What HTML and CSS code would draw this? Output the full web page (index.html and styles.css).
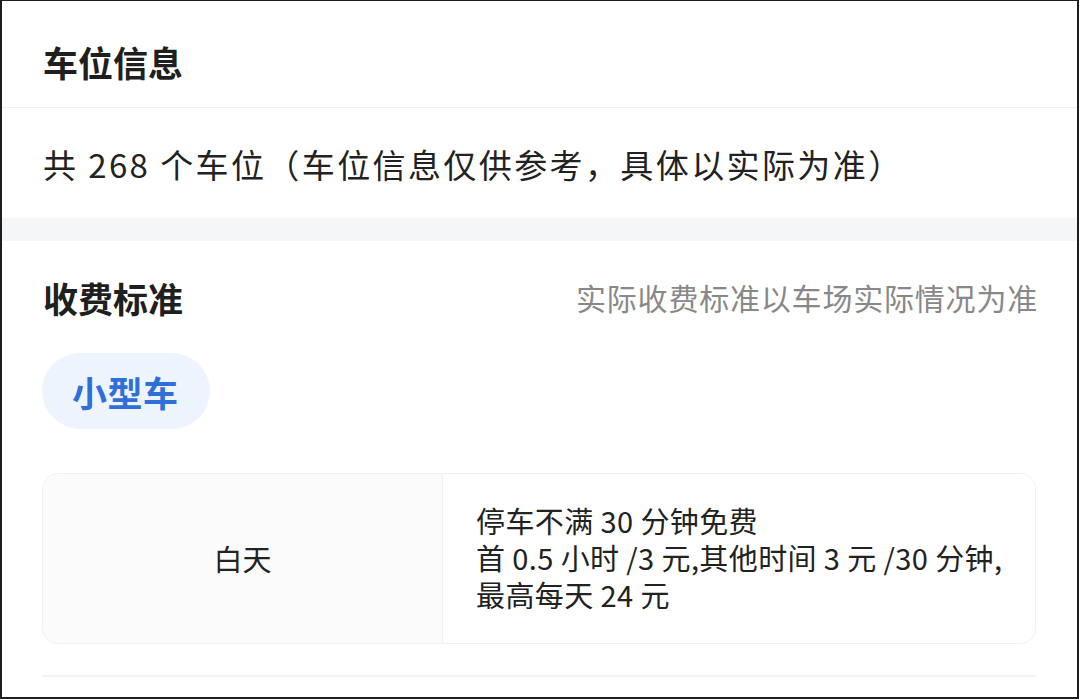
FILE: index.html
```html
<!DOCTYPE html>
<html lang="zh-CN">
<head>
<meta charset="utf-8">
<title>车位信息</title>
<link rel="stylesheet" href="styles.css">
</head>
<body>
<div class="frame">
  <div class="head">
    <h2 class="title">车位信息</h2>
  </div>
  <div class="divider"></div>
  <div class="info">共 268 个车位（车位信息仅供参考，具体以实际为准）</div>
  <div class="band"></div>
  <div class="fee">
    <div class="fee-head">
      <h2 class="title">收费标准</h2>
      <span class="note">实际收费标准以车场实际情况为准</span>
    </div>
    <div class="tags">
      <span class="tag">小型车</span>
    </div>
    <div class="table">
      <div class="cell-label">白天</div>
      <div class="cell-text">
        <p>停车不满 30 分钟免费</p>
        <p>首 0.5 小时 /3 元,其他时间 3 元 /30 分钟,</p>
        <p>最高每天 24 元</p>
      </div>
    </div>
    <div class="bottom-line"></div>
  </div>
</div>
</body>
</html>
```
FILE: styles.css
```css
* { box-sizing: border-box; }
html, body {
  margin: 0;
  padding: 0;
  background: #ffffff;
}
body {
  font-family: "Noto Sans CJK SC", "Noto Sans", sans-serif;
  color: #222222;
}
.frame {
  width: 1079px;
  height: 699px;
  border: 2px solid #1e1e1e;
  border-top-width: 1px;
  overflow: hidden;
  background: #ffffff;
}
.head {
  height: 106px;
  display: flex;
  align-items: center;
  padding-left: 41px;
  padding-top: 14px;
}
.title {
  margin: 0;
  font-size: 35px;
  font-weight: 700;
  color: #1f1f1f;
  line-height: 1;
}
.divider {
  height: 1px;
  background: #f0f0f0;
}
.info {
  height: 110px;
  display: flex;
  align-items: center;
  padding-left: 41px;
  padding-top: 2px;
  font-size: 33px;
  letter-spacing: 2.4px;
  color: #222222;
}
.band {
  height: 23px;
  background: #f5f6f8;
}
.fee {
  padding: 0 41px 0 40px;
}
.fee-head {
  height: 112px;
  display: flex;
  align-items: center;
  justify-content: space-between;
  padding-left: 1px;
}
.note {
  font-size: 30px;
  letter-spacing: 0.8px;
  color: #888888;
  margin-right: -2px;
}
.tags {
  display: flex;
}
.tag {
  height: 76px;
  padding: 0 31px 0 30px;
  border-radius: 38px;
  background: #eef4fd;
  color: #2e6fd8;
  font-size: 35px;
  font-weight: 700;
  letter-spacing: 0.5px;
  display: flex;
  align-items: center;
}
.table {
  margin-top: 44px;
  height: 171px;
  display: flex;
  border: 1px solid #f0f0f0;
  border-radius: 16px;
  overflow: hidden;
}
.cell-label {
  width: 400px;
  flex: none;
  background: #fbfbfb;
  border-right: 1px solid #f0f0f0;
  display: flex;
  align-items: center;
  justify-content: center;
  font-size: 29px;
  color: #222222;
  padding-bottom: 2px;
}
.cell-text {
  flex: 1;
  display: flex;
  flex-direction: column;
  justify-content: center;
  padding-left: 33px;
  padding-bottom: 2px;
  background: #ffffff;
}
.cell-text p {
  margin: 0;
  font-size: 29px;
  line-height: 37px;
  letter-spacing: 0.4px;
  color: #222222;
}
.bottom-line {
  margin-top: 31px;
  height: 2px;
  background: #f3f3f3;
}
```
